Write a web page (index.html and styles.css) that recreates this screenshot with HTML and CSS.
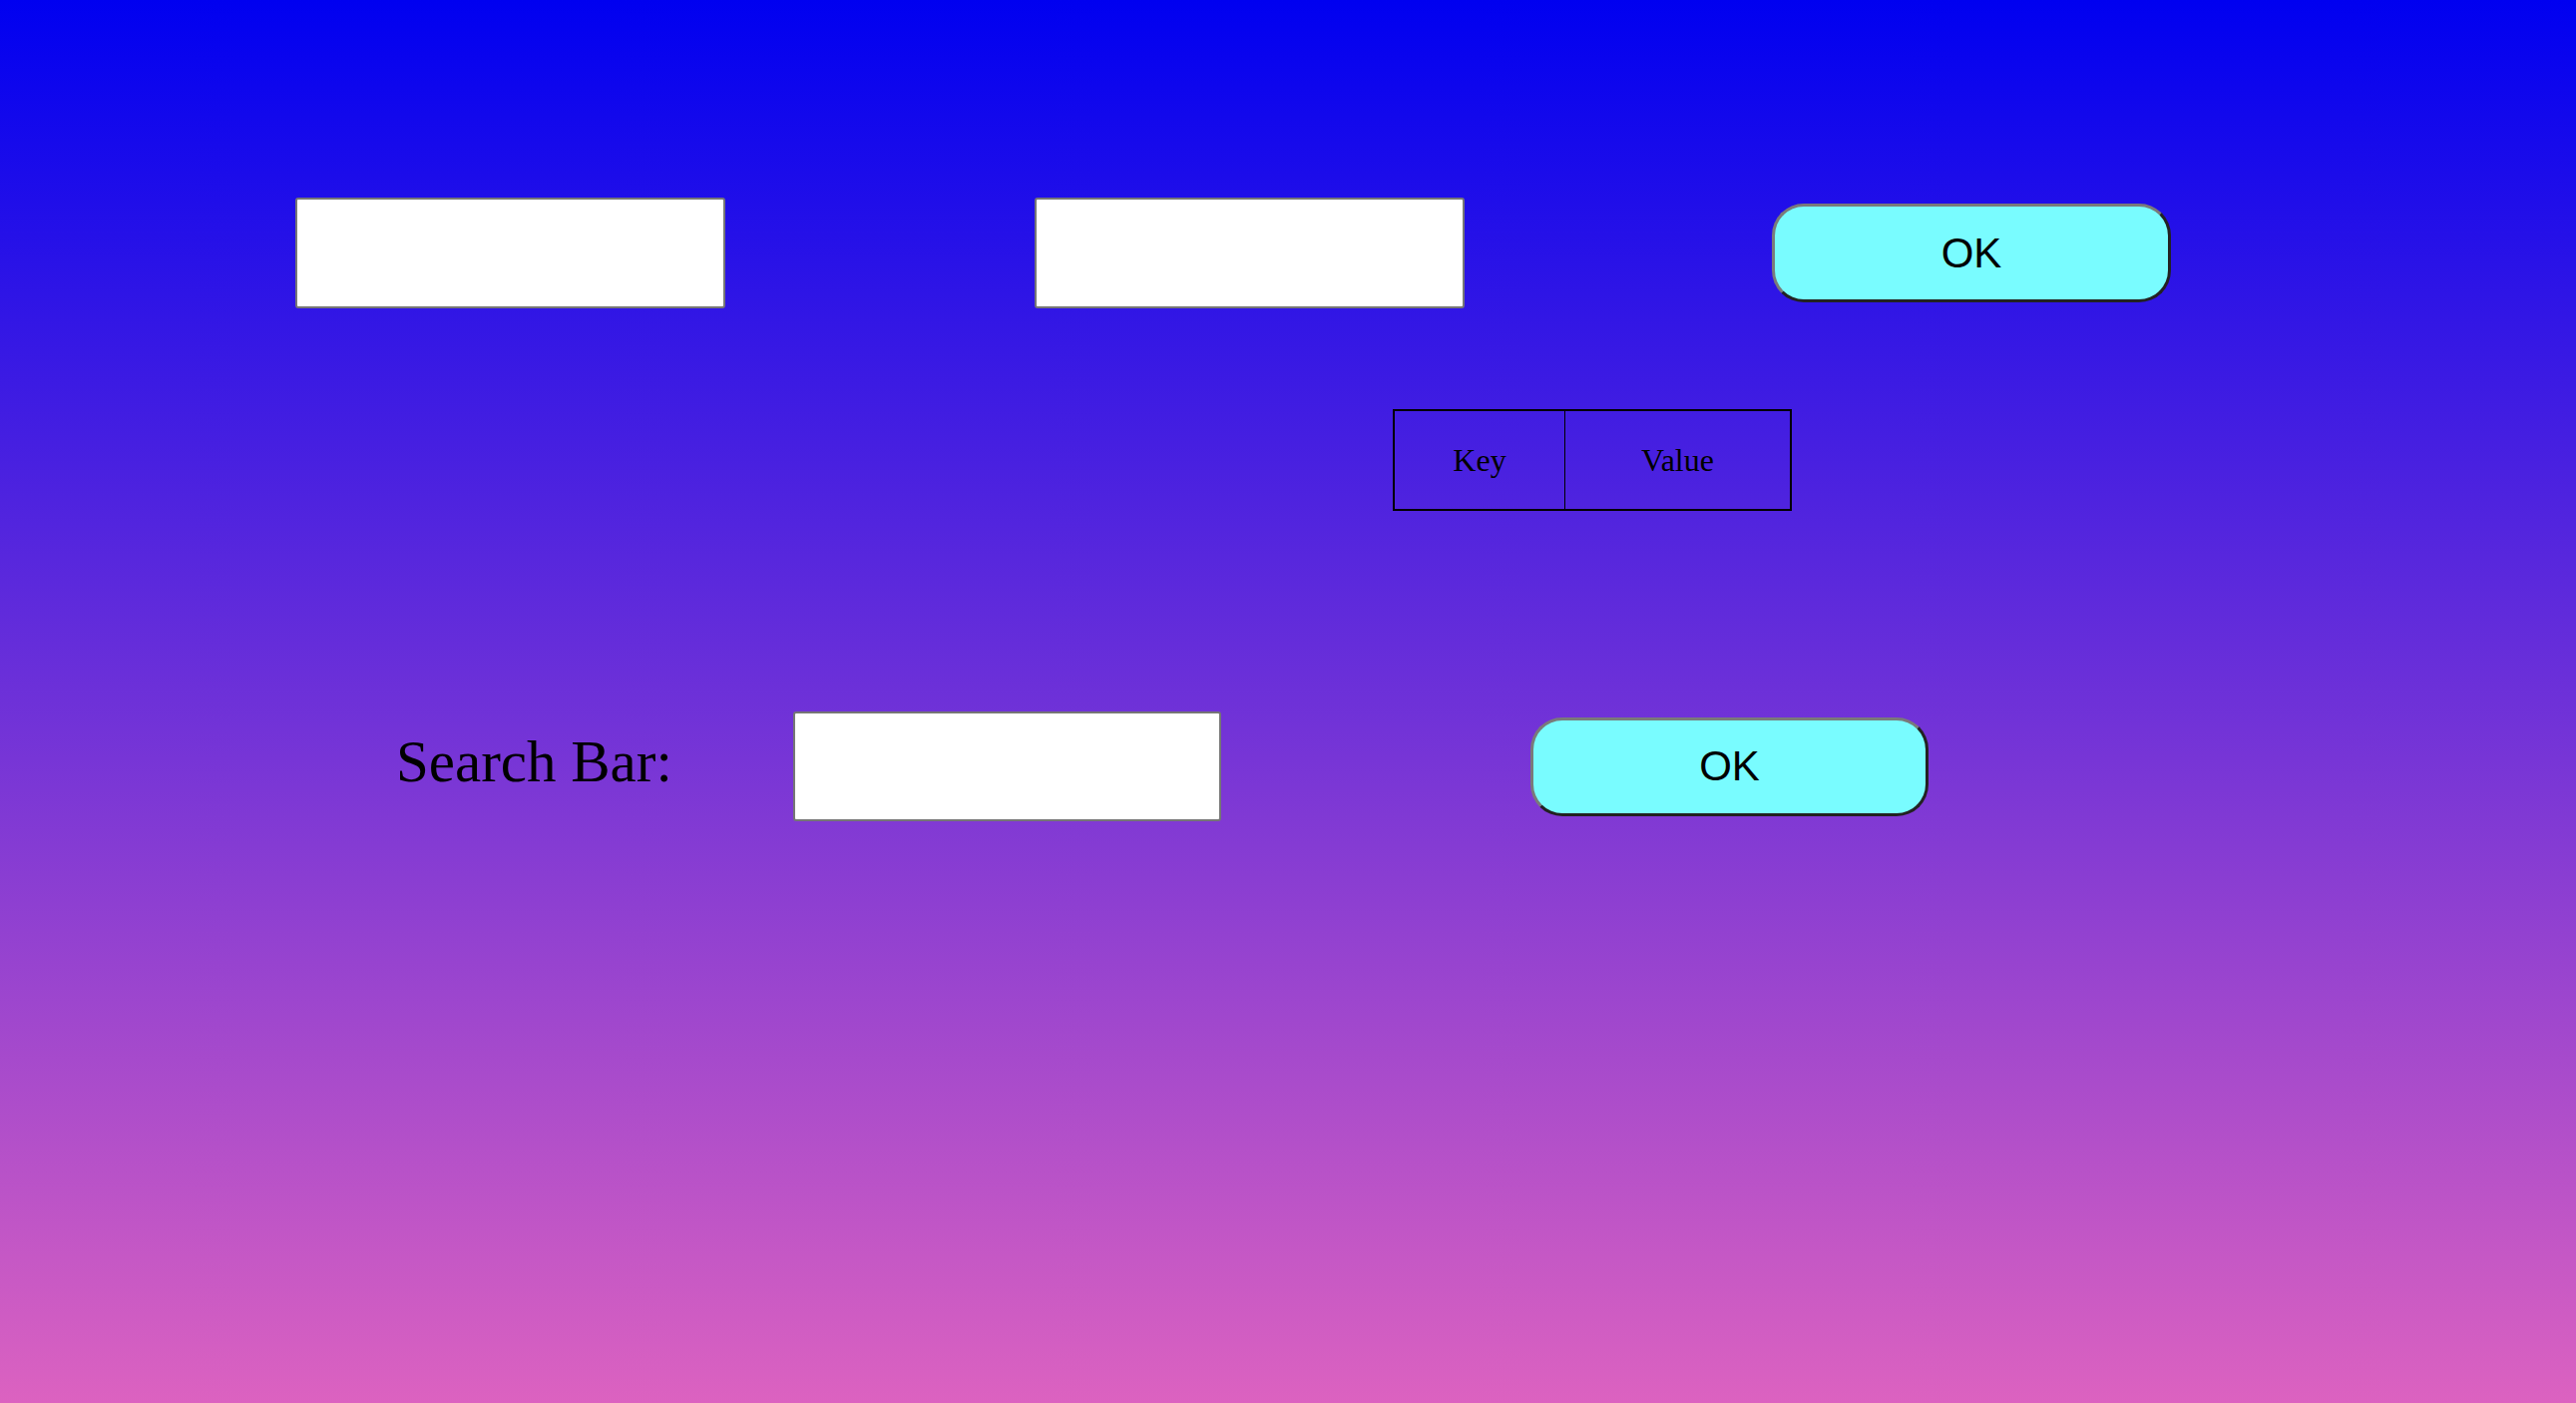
FILE: index.html
```html
<!DOCTYPE html>
<html>
<head>
<meta charset="utf-8">
<link rel="stylesheet" href="styles.css">
</head>
<body>
<div class="page">
  <div class="row row-top">
    <input class="field first" type="text">
    <input class="field second" type="text">
    <button class="ok">OK</button>
  </div>
  <table class="kv">
    <tr>
      <td class="key">Key</td>
      <td class="value">Value</td>
    </tr>
  </table>
  <div class="row row-search">
    <label class="search-label">Search Bar:</label>
    <input class="field" type="text">
    <button class="ok">OK</button>
  </div>
</div>
</body>
</html>
```

FILE: styles.css
```css
html, body {
  margin: 0;
  padding: 0;
}
body {
  min-height: 1406px;
  background: linear-gradient(to bottom, #0000f0 0%, #dc62c0 100%);
  font-family: "Liberation Serif", "Times New Roman", serif;
}
.page {
  display: flex;
  flex-direction: column;
  align-items: flex-start;
}
.row {
  display: flex;
  align-items: center;
}
.row-top {
  margin-top: 198px;
  padding-left: 296px;
  height: 111px;
}
.row-top .first {
  margin-right: 310px;
}
.row-top .second {
  margin-right: 308px;
}
.field {
  box-sizing: border-box;
  width: 431px;
  height: 111px;
  margin: 0;
  border: 2px solid #767676;
  border-radius: 3px;
  background: #fff;
}
.ok {
  box-sizing: border-box;
  width: 400px;
  height: 99px;
  margin: 0;
  padding: 0;
  background: #79fcff;
  border-style: solid;
  border-width: 3px;
  border-color: #7a7a7a #222 #222 #7a7a7a;
  border-radius: 32px;
  font-family: "Liberation Sans", Arial, sans-serif;
  font-size: 42px;
  color: #000;
}
.kv {
  margin-top: 101px;
  margin-left: 1396px;
  width: 400px;
  height: 102px;
  border-collapse: collapse;
  border: 2px solid #000;
  font-size: 32px;
  color: #000;
}
.kv td {
  border: 1px solid #000;
  text-align: center;
  vertical-align: middle;
  padding: 0;
}
.kv .key {
  width: 170px;
}
.row-search {
  margin-top: 201px;
  padding-left: 397px;
  height: 110px;
}
.search-label {
  font-size: 59px;
  width: 277px;
  white-space: nowrap;
  margin-right: 121px;
  margin-bottom: 10px;
  color: #000;
}
.row-search .field {
  height: 110px;
  width: 429px;
  margin-right: 310px;
}
.row-search .ok {
  width: 399px;
}
```
